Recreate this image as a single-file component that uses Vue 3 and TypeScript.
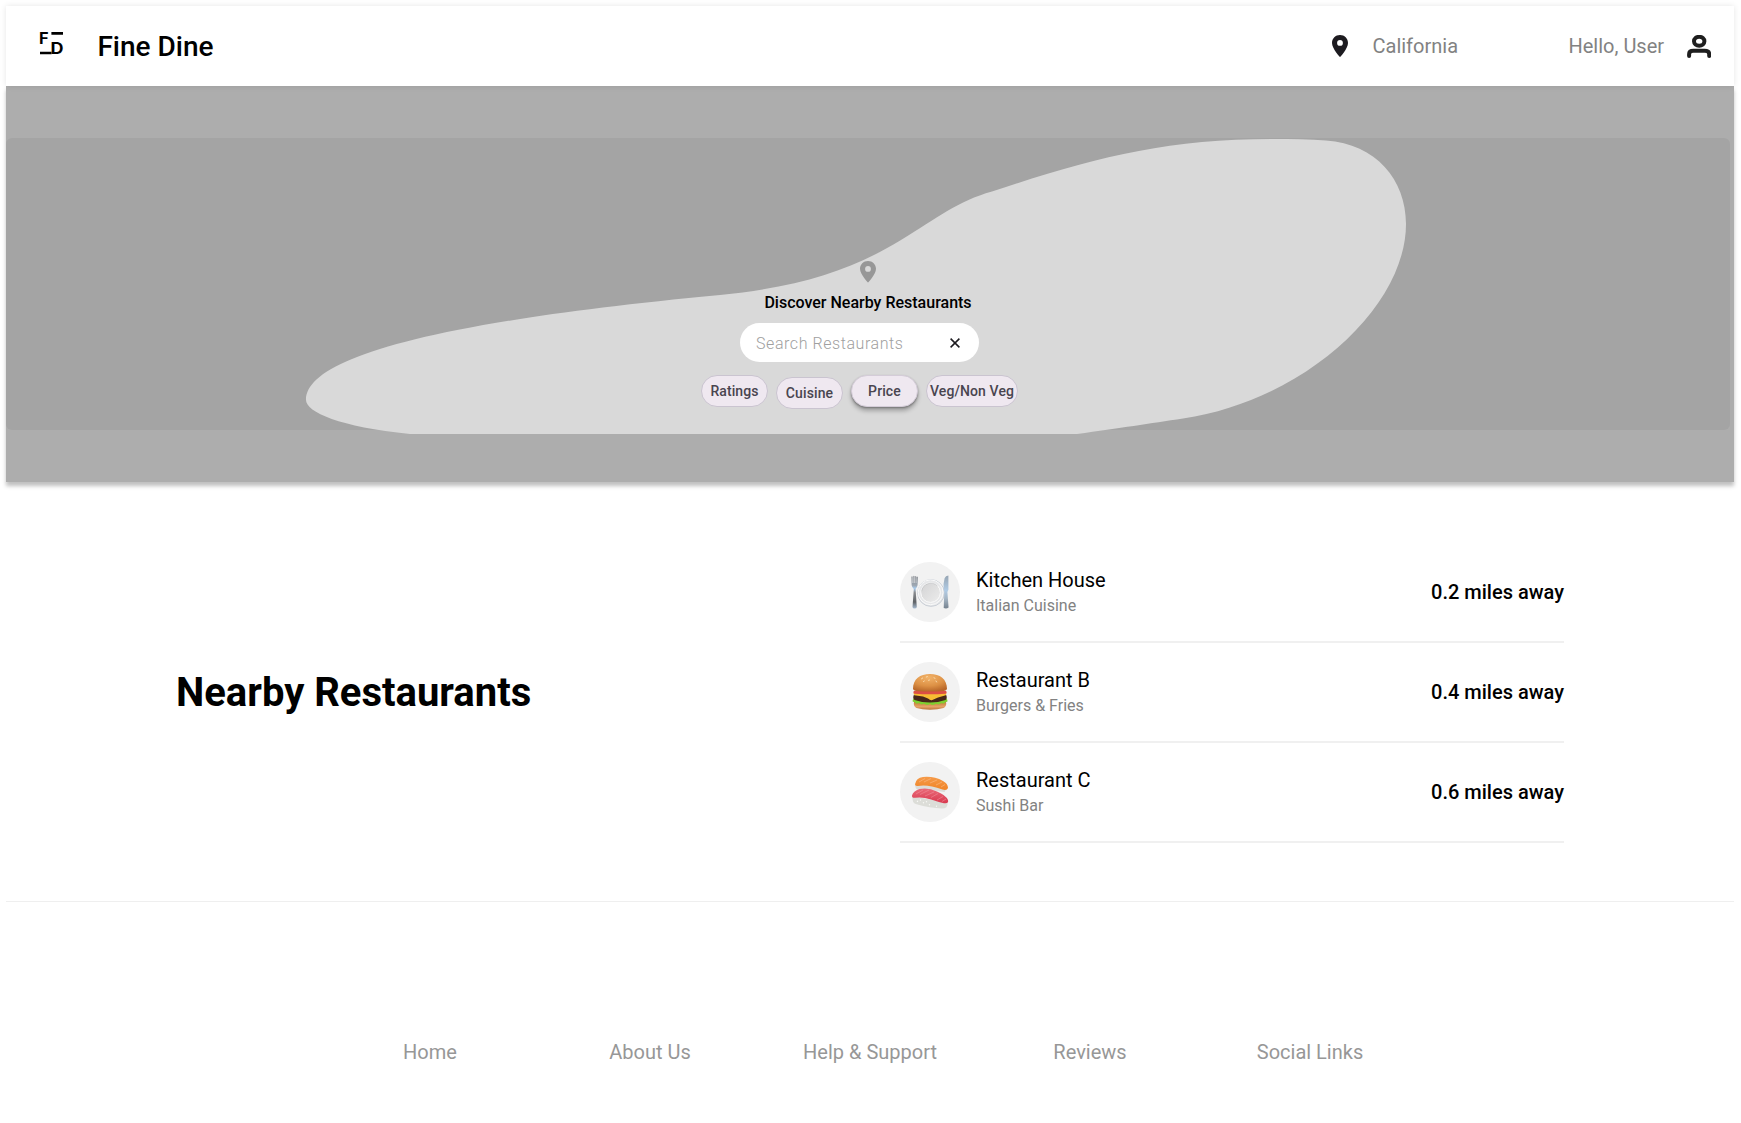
<script setup lang="ts">
interface Restaurant {
  name: string
  cuisine: string
  distance: string
  icon: 'plate' | 'burger' | 'sushi'
}

interface Filter {
  label: string
  kind?: string
}

const restaurants: Restaurant[] = [
  { name: 'Kitchen House', cuisine: 'Italian Cuisine', distance: '0.2 miles away', icon: 'plate' },
  { name: 'Restaurant B', cuisine: 'Burgers & Fries', distance: '0.4 miles away', icon: 'burger' },
  { name: 'Restaurant C', cuisine: 'Sushi Bar', distance: '0.6 miles away', icon: 'sushi' },
]

const filters: Filter[] = [
  { label: 'Ratings' },
  { label: 'Cuisine', kind: 'lowered' },
  { label: 'Price', kind: 'raised' },
  { label: 'Veg/Non Veg', kind: 'wide' },
]

const links: string[] = ['Home', 'About Us', 'Help & Support', 'Reviews', 'Social Links']
</script>

<template>
  <div class="page">
    <header class="header">
      <svg class="logo" width="26" height="34" viewBox="0 -4 26 34">
        <text x="-0.1" y="12.6" textLength="9.6" lengthAdjust="spacingAndGlyphs">F</text>
        <text x="11.6" y="23.2" textLength="13" lengthAdjust="spacingAndGlyphs">D</text>
        <path d="M12.4 2.4H24M1 22H12.6" stroke="#000" stroke-width="2.6" />
      </svg>
      <h1 class="brand">Fine Dine</h1>
      <svg class="pin" width="16" height="22" viewBox="0 0 16 22">
        <path fill-rule="evenodd" d="M8 0C3.5 0 0 3.4 0 7.9C0 13.6 8 22 8 22S16 13.6 16 7.9C16 3.4 12.5 0 8 0ZM8 5A2.9 2.9 0 1 1 8 10.8A2.9 2.9 0 1 1 8 5Z" fill="#1d1b20" />
      </svg>
      <span class="place">California</span>
      <span class="hello">Hello, User</span>
      <svg class="user" width="24" height="23" viewBox="0 0 24 23">
        <ellipse cx="12.2" cy="6.3" rx="5.2" ry="4.5" fill="none" stroke="#1e1e1e" stroke-width="4" />
        <path d="M2.1 21V19.2C2.1 16.8 3.8 15.8 6.5 15.8H17.7C20.4 15.8 22.2 16.8 22.2 19.2V21" fill="none" stroke="#1e1e1e" stroke-width="4" stroke-linecap="round" />
      </svg>
    </header>

    <section class="hero">
      <div class="panel"></div>
      <svg class="blob" width="1728" height="296" viewBox="6 138 1728 296">
        <path d="M306 400C306 362 410 324 720 295C800 287 852 270 901 240C937 218 958 201 992 191.5C1090 159 1163 139 1272 139C1292 139 1310 139 1326 140.6C1376 144 1406 180 1406 224C1406 306 1306 400 1183 418.5C1150 423.5 1120 428 1077 434H410C340 427 306 412 306 400Z" fill="#d9d9d9" />
      </svg>
      <div class="finder">
        <svg class="finder-pin" width="16" height="22" viewBox="0 0 16 22">
          <path fill-rule="evenodd" d="M8 0C3.5 0 0 3.4 0 7.8C0 13.5 8 21.6 8 21.6S16 13.5 16 7.8C16 3.4 12.5 0 8 0ZM8 5A2.9 2.9 0 1 1 8 10.8A2.9 2.9 0 1 1 8 5Z" fill="#979797" />
        </svg>
        <h2 class="finder-title">Discover Nearby Restaurants</h2>
        <div class="search">
          <span class="hint">Search Restaurants</span>
          <svg width="10" height="10" viewBox="0 0 10 10">
            <path d="M.6 .6L9.4 9.4M9.4 .6L.6 9.4" stroke="#1d1b20" stroke-width="1.5" />
          </svg>
        </div>
        <div class="filters">
          <span v-for="f in filters" :key="f.label" class="chip" :class="f.kind">{{ f.label }}</span>
        </div>
      </div>
    </section>

    <section class="nearby">
      <h2 class="nearby-title">Nearby Restaurants</h2>
      <ul class="list">
        <li v-for="r in restaurants" :key="r.name" class="row">
          <div class="avatar">
            <svg v-if="r.icon === 'plate'" width="40" height="40" viewBox="0 0 40 40">
              <defs>
                <linearGradient id="steel" x1="0" y1="0" x2="0" y2="1">
                  <stop offset="0" stop-color="#85898f" />
                  <stop offset=".3" stop-color="#9fa9b4" />
                  <stop offset=".38" stop-color="#a9ccee" />
                  <stop offset=".5" stop-color="#8a8d91" />
                  <stop offset=".8" stop-color="#5f6266" />
                  <stop offset="1" stop-color="#a9bdd3" />
                </linearGradient>
                <linearGradient id="blade" x1="0" y1="0" x2="0" y2="1">
                  <stop offset="0" stop-color="#96a5b3" />
                  <stop offset=".45" stop-color="#b0cbe5" />
                  <stop offset=".7" stop-color="#a5b5c4" />
                  <stop offset="1" stop-color="#75828f" />
                </linearGradient>
                <linearGradient id="dish" x1="0" y1="0" x2="1" y2="1">
                  <stop offset="0" stop-color="#d3d3d4" />
                  <stop offset="1" stop-color="#ececec" />
                </linearGradient>
              </defs>
              <circle cx="21" cy="21" r="13.4" fill="#e6e7e9" stroke="#c3c9d2" stroke-width=".8" />
              <circle cx="20.6" cy="20.3" r="12.4" fill="none" stroke="#fafafa" stroke-width="1" />
              <circle cx="20.6" cy="20.6" r="9.8" fill="url(#dish)" stroke="#fbfbfb" stroke-width="1" />
              <path d="M11.6 19.5A9.3 9.3 0 0 1 27.4 14" fill="none" stroke="#b8babd" stroke-width=".6" />
              <path d="M1.4 4.8Q2 3.5 2.6 4.8V11H3.3V4.3Q3.9 3.3 4.5 4.3V11H5.2V4.3Q5.8 3.5 6.3 4.8V11H6.6V5.1Q7.2 4 7.9 5.2L7.6 13Q7.3 15 5.6 17L6.8 35Q6.6 36.6 4.6 36.6Q2.6 36.6 2.5 35L3.8 17Q1.8 15 1.6 13Z" fill="url(#steel)" />
              <path d="M33.7 36L34.3 20L33.7 17.3Q33 12 34.6 6.2Q35.6 3.5 38.4 3.5V17.8L37.4 20L38.6 35.5Q36.5 37 33.7 36Z" fill="url(#blade)" />
            </svg>
            <svg v-else-if="r.icon === 'burger'" width="40" height="40" viewBox="0 0 40 40">
              <defs>
                <radialGradient id="bun" cx=".45" cy=".2" r=".8">
                  <stop offset="0" stop-color="#f2b36a" />
                  <stop offset=".6" stop-color="#dd9145" />
                  <stop offset="1" stop-color="#b9682a" />
                </radialGradient>
                <linearGradient id="base" x1="0" y1="0" x2="0" y2="1">
                  <stop offset="0" stop-color="#c57a3c" />
                  <stop offset=".6" stop-color="#e5a467" />
                  <stop offset="1" stop-color="#b87035" />
                </linearGradient>
              </defs>
              <path d="M4 30H36Q37 34 33.5 36Q28 37.8 20 37.8Q12 37.8 6.5 36Q3 34 4 30Z" fill="url(#base)" />
              <path d="M3.5 26.5Q1.2 30.5 4.7 30Q6 33 9 31Q11 33.5 14 31.8Q17 34 20 32Q23 34 26 31.8Q29 33.5 31.5 31Q34 32.5 35.5 30Q38.8 30.5 36.7 26.5Z" fill="#7fd030" />
              <path d="M4 22.5H36Q37.7 26 35.5 28Q28 30.6 20 30.6Q12 30.6 4.5 28Q2.3 26 4 22.5Z" fill="#472719" />
              <path d="M3.5 21Q20 18 36.5 21L35.8 23.2L28 25.4L21.8 28.2Q20.3 28.6 18 26.6L13 24.6L4.2 23.2Z" fill="#f8bd33" />
              <path d="M4 19Q20 17.5 36 19Q37.5 20.8 35.5 21.8Q20 22.8 4.5 21.8Q2.5 20.8 4 19Z" fill="#dc4f45" />
              <path d="M3 17C3 7 10 2 20 2S37 7 37 17Q36.5 18.8 34 18.9Q20 20.2 6 18.9Q3.5 18.8 3 17Z" fill="url(#bun)" />
              <path d="M11.5 6.8L12.7 6M16.3 5L17.4 4.6M18.5 8.3L19.5 8M24 5.8L25 6.3M26 9L26.6 10M13.5 9.5L14.3 9" stroke="#fbe0b4" stroke-width=".9" stroke-linecap="round" />
            </svg>
            <svg v-else width="40" height="40" viewBox="0 0 40 40">
              <defs>
                <linearGradient id="salmon" x1="0" y1="0" x2="0" y2="1">
                  <stop offset="0" stop-color="#f59a49" />
                  <stop offset="1" stop-color="#f08427" />
                </linearGradient>
                <linearGradient id="tuna" x1="0" y1="0" x2="0" y2="1">
                  <stop offset="0" stop-color="#ea6b79" />
                  <stop offset="1" stop-color="#d8394f" />
                </linearGradient>
              </defs>
              <path d="M5.2 12Q5 18.3 9.5 18Q22 17.5 34.5 20L37 16Z" fill="#dcdcd9" />
              <path d="M5 12.3Q6 6 13 5Q24 4 33 9Q38 11.5 38 16Q37 18.8 32.5 17.5Q17 12 8 14Q5 14.5 5 12.3Z" fill="url(#salmon)" />
              <path d="M9 10L15 6.5M14 10L21 6.5M20 11L27 8M26 13L32 10M31 15L35 12.5" stroke="#f9b57c" stroke-width=".7" />
              <path d="M2.3 24Q2 31.5 6.5 32.3Q20 36 32 36.5Q38 36.5 37.6 31Z" fill="#dcddd8" />
              <path d="M2 23.5Q3 19 9.5 17Q18 15 27 19.4Q36 23 38 28Q39 32 34 31.2Q28 29.8 21 27.4Q12 24.5 5 25.8Q1.8 26.2 2 23.5Z" fill="url(#tuna)" />
              <path d="M6 22L13 18M10 22.5L19 18M15 24L24 20M21 25.5L28 21.5M27 28L33 24.5M32 29.5L36 27" stroke="#f297a2" stroke-width=".5" />
              <path d="M7 29L8 29.6M13 31L14 30.5M19 33L20 32.5M26 34L27 34.3M10 27.8L11 28.2M16 29.5L17 30" stroke="#fafaf8" stroke-width="1.3" />
            </svg>
          </div>
          <div class="info">
            <span class="name">{{ r.name }}</span>
            <span class="cuisine">{{ r.cuisine }}</span>
          </div>
          <span class="distance">{{ r.distance }}</span>
        </li>
      </ul>
    </section>

    <footer class="footer">
      <a v-for="l in links" :key="l" class="link">{{ l }}</a>
    </footer>
  </div>
</template>

<style>
body {
  background: #fff;
  overflow: hidden;
}
</style>

<style scoped>
.page {
  width: 1728px;
  height: 1117px;
  margin: 6px 0 0 6px;
  font-family: Roboto, "Liberation Sans", sans-serif;
  color: #000;
  background: #fff;
}
h1,
h2,
ul {
  margin: 0;
  padding: 0;
}
svg {
  display: block;
  flex: none;
}
.header {
  position: relative;
  z-index: 1;
  box-sizing: border-box;
  display: flex;
  align-items: center;
  height: 80px;
  padding: 0 23px 0 33px;
  background: #fff;
  box-shadow: 0 0 6px rgba(0, 0, 0, 0.1);
  white-space: nowrap;
}
.logo {
  margin-bottom: 4px;
  overflow: visible;
}
.logo text {
  font: 700 15.4px Inter, Roboto, sans-serif;
}
.brand {
  margin: 2px 0 0 32.4px;
  font-size: 28px;
  font-weight: 500;
  line-height: 36px;
}
.pin {
  margin-left: auto;
}
.place {
  width: 196px;
  margin-left: 25px;
  font-size: 20px;
  line-height: 28px;
  color: #828282;
}
.hello {
  width: 95.5px;
  font-size: 20px;
  line-height: 28px;
  color: #828282;
}
.user {
  margin-left: 23px;
}
.hero {
  position: relative;
  box-sizing: border-box;
  height: 396px;
  padding: 52px 4px 52px 0;
  background: #adadad;
  box-shadow: 0 4px 4px rgba(0, 0, 0, 0.25);
}
.panel {
  height: 292px;
  border-radius: 6px;
  background: #a4a4a4;
}
.blob {
  position: absolute;
  left: 0;
  top: 52px;
}
.finder {
  position: absolute;
  inset: 175px 21px auto 0;
  display: flex;
  flex-direction: column;
  align-items: center;
}
.finder-pin {
  margin-left: 17px;
}
.finder-title {
  margin: 7px 0 8px 17px;
  font-size: 16px;
  font-weight: 500;
  line-height: 25px;
}
.search {
  box-sizing: border-box;
  display: flex;
  align-items: center;
  justify-content: space-between;
  width: 238.5px;
  height: 39.4px;
  margin-bottom: 0.6px;
  padding: 0 18.5px 0 15.8px;
  border-radius: 20px;
  background: #fff;
}
.hint {
  margin-top: 2px;
  font-size: 16px;
  font-weight: 300;
  letter-spacing: 0.56px;
  line-height: 24px;
  color: #a0a0a0;
}
.filters {
  display: flex;
  gap: 8px;
  margin-top: 12px;
}
.chip {
  box-sizing: border-box;
  width: 67px;
  height: 32px;
  border: 1px solid #cac4d0;
  border-radius: 16px;
  font-size: 14px;
  font-weight: 500;
  letter-spacing: 0.1px;
  line-height: 31px;
  text-align: center;
  white-space: nowrap;
  color: #49454f;
  background: #efe8f0;
}
.lowered {
  margin-top: 2px;
  margin-bottom: -2px;
}
.raised {
  border-color: #d4ccd8;
  box-shadow: 0 4px 4px rgba(0, 0, 0, 0.25), 0 1px 2px rgba(0, 0, 0, 0.3);
}
.wide {
  width: 92px;
}
.nearby {
  box-sizing: border-box;
  display: flex;
  align-items: center;
  justify-content: space-between;
  height: 420px;
  padding: 2px 170px 0;
  border-bottom: 1px solid #efefef;
}
.nearby-title {
  font-size: 40px;
  font-weight: 700;
  line-height: 48px;
}
.list {
  width: 664px;
  list-style: none;
}
.row {
  box-sizing: border-box;
  display: flex;
  align-items: center;
  height: 100px;
  border-bottom: 2px solid #f0f0f0;
}
.avatar {
  display: flex;
  align-items: center;
  justify-content: center;
  width: 60px;
  height: 60px;
  border-radius: 50%;
  background: #f2f2f2;
}
.info {
  display: flex;
  flex: 1;
  flex-direction: column;
  margin-left: 16px;
}
.name {
  font-size: 20px;
  line-height: 28px;
}
.cuisine {
  font-size: 16px;
  line-height: 24px;
  color: #828282;
}
.distance {
  font-size: 20px;
  font-weight: 500;
  line-height: 28px;
}
.footer {
  display: flex;
  justify-content: center;
  padding: 136px 0 0 0;
}
.link {
  width: 220px;
  font-size: 20px;
  line-height: 28px;
  text-align: center;
  color: #979797;
}
</style>
